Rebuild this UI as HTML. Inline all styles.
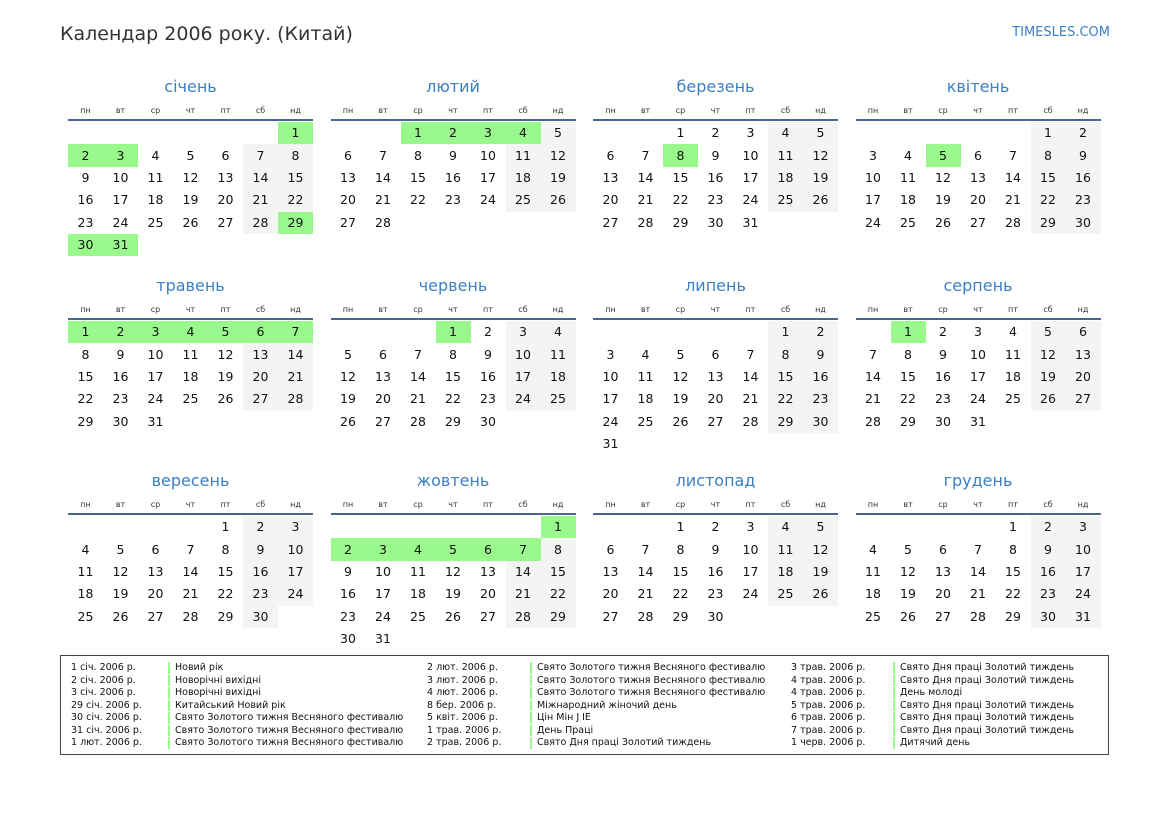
<!DOCTYPE html>
<html><head><meta charset="utf-8"><style>
body{margin:0;width:1169px;height:827px;background:#fff;font-family:"DejaVu Sans","Liberation Sans",sans-serif;position:relative;overflow:hidden;color:#111}
.hd{position:absolute;left:60px;top:21px;font-size:19px;color:#333;line-height:26px}
.ts{position:absolute;right:59px;top:24px;font-size:13px;color:#3b7fc4;line-height:18px}
.m{position:absolute;width:245px}
.t{height:30px;line-height:34px;text-align:center;font-size:16px;color:#3b7fc4}
.w{display:flex;height:19px;border-bottom:2px solid #4a6590;box-sizing:content-box}
.w span{flex:1;text-align:center;font-size:8px;line-height:22px;height:19px;overflow:visible;color:#333}
table{border-collapse:collapse;table-layout:fixed;width:245px;margin-top:1px}
td{width:35px;height:22.4px;padding:0;text-align:center;font-size:12.5px;line-height:22px}
td.e{background:#f4f4f4}td.h{background:#9af98c}
.lg{position:absolute;left:60px;top:655px;width:1047px;height:98px;border:1.5px solid #444}
.c{position:absolute;top:6px;font-size:9.5px;line-height:12.5px;color:#111;white-space:nowrap}
.b{border-left:2px solid #9af98c;padding-left:5px;margin-bottom:1px;line-height:11.5px}
</style></head><body>
<div class="hd">Календар 2006 року. (Китай)</div>
<div class="ts">TIMESLES.COM</div>

<div class="m" style="left:68px;top:70px"><div class="t">січень</div><div class="w"><span>пн</span><span>вт</span><span>ср</span><span>чт</span><span>пт</span><span>сб</span><span>нд</span></div><table>
<tr><td></td><td></td><td></td><td></td><td></td><td></td><td class="h">1</td></tr>
<tr><td class="h">2</td><td class="h">3</td><td>4</td><td>5</td><td>6</td><td class="e">7</td><td class="e">8</td></tr>
<tr><td>9</td><td>10</td><td>11</td><td>12</td><td>13</td><td class="e">14</td><td class="e">15</td></tr>
<tr><td>16</td><td>17</td><td>18</td><td>19</td><td>20</td><td class="e">21</td><td class="e">22</td></tr>
<tr><td>23</td><td>24</td><td>25</td><td>26</td><td>27</td><td class="e">28</td><td class="h">29</td></tr>
<tr><td class="h">30</td><td class="h">31</td><td></td><td></td><td></td><td></td><td></td></tr></table></div>

<div class="m" style="left:330.5px;top:70px"><div class="t">лютий</div><div class="w"><span>пн</span><span>вт</span><span>ср</span><span>чт</span><span>пт</span><span>сб</span><span>нд</span></div><table>
<tr><td></td><td></td><td class="h">1</td><td class="h">2</td><td class="h">3</td><td class="h">4</td><td class="e">5</td></tr>
<tr><td>6</td><td>7</td><td>8</td><td>9</td><td>10</td><td class="e">11</td><td class="e">12</td></tr>
<tr><td>13</td><td>14</td><td>15</td><td>16</td><td>17</td><td class="e">18</td><td class="e">19</td></tr>
<tr><td>20</td><td>21</td><td>22</td><td>23</td><td>24</td><td class="e">25</td><td class="e">26</td></tr>
<tr><td>27</td><td>28</td><td></td><td></td><td></td><td></td><td></td></tr></table></div>

<div class="m" style="left:593px;top:70px"><div class="t">березень</div><div class="w"><span>пн</span><span>вт</span><span>ср</span><span>чт</span><span>пт</span><span>сб</span><span>нд</span></div><table>
<tr><td></td><td></td><td>1</td><td>2</td><td>3</td><td class="e">4</td><td class="e">5</td></tr>
<tr><td>6</td><td>7</td><td class="h">8</td><td>9</td><td>10</td><td class="e">11</td><td class="e">12</td></tr>
<tr><td>13</td><td>14</td><td>15</td><td>16</td><td>17</td><td class="e">18</td><td class="e">19</td></tr>
<tr><td>20</td><td>21</td><td>22</td><td>23</td><td>24</td><td class="e">25</td><td class="e">26</td></tr>
<tr><td>27</td><td>28</td><td>29</td><td>30</td><td>31</td><td></td><td></td></tr></table></div>

<div class="m" style="left:855.5px;top:70px"><div class="t">квітень</div><div class="w"><span>пн</span><span>вт</span><span>ср</span><span>чт</span><span>пт</span><span>сб</span><span>нд</span></div><table>
<tr><td></td><td></td><td></td><td></td><td></td><td class="e">1</td><td class="e">2</td></tr>
<tr><td>3</td><td>4</td><td class="h">5</td><td>6</td><td>7</td><td class="e">8</td><td class="e">9</td></tr>
<tr><td>10</td><td>11</td><td>12</td><td>13</td><td>14</td><td class="e">15</td><td class="e">16</td></tr>
<tr><td>17</td><td>18</td><td>19</td><td>20</td><td>21</td><td class="e">22</td><td class="e">23</td></tr>
<tr><td>24</td><td>25</td><td>26</td><td>27</td><td>28</td><td class="e">29</td><td class="e">30</td></tr></table></div>

<div class="m" style="left:68px;top:269px"><div class="t">травень</div><div class="w"><span>пн</span><span>вт</span><span>ср</span><span>чт</span><span>пт</span><span>сб</span><span>нд</span></div><table>
<tr><td class="h">1</td><td class="h">2</td><td class="h">3</td><td class="h">4</td><td class="h">5</td><td class="h">6</td><td class="h">7</td></tr>
<tr><td>8</td><td>9</td><td>10</td><td>11</td><td>12</td><td class="e">13</td><td class="e">14</td></tr>
<tr><td>15</td><td>16</td><td>17</td><td>18</td><td>19</td><td class="e">20</td><td class="e">21</td></tr>
<tr><td>22</td><td>23</td><td>24</td><td>25</td><td>26</td><td class="e">27</td><td class="e">28</td></tr>
<tr><td>29</td><td>30</td><td>31</td><td></td><td></td><td></td><td></td></tr></table></div>

<div class="m" style="left:330.5px;top:269px"><div class="t">червень</div><div class="w"><span>пн</span><span>вт</span><span>ср</span><span>чт</span><span>пт</span><span>сб</span><span>нд</span></div><table>
<tr><td></td><td></td><td></td><td class="h">1</td><td>2</td><td class="e">3</td><td class="e">4</td></tr>
<tr><td>5</td><td>6</td><td>7</td><td>8</td><td>9</td><td class="e">10</td><td class="e">11</td></tr>
<tr><td>12</td><td>13</td><td>14</td><td>15</td><td>16</td><td class="e">17</td><td class="e">18</td></tr>
<tr><td>19</td><td>20</td><td>21</td><td>22</td><td>23</td><td class="e">24</td><td class="e">25</td></tr>
<tr><td>26</td><td>27</td><td>28</td><td>29</td><td>30</td><td></td><td></td></tr></table></div>

<div class="m" style="left:593px;top:269px"><div class="t">липень</div><div class="w"><span>пн</span><span>вт</span><span>ср</span><span>чт</span><span>пт</span><span>сб</span><span>нд</span></div><table>
<tr><td></td><td></td><td></td><td></td><td></td><td class="e">1</td><td class="e">2</td></tr>
<tr><td>3</td><td>4</td><td>5</td><td>6</td><td>7</td><td class="e">8</td><td class="e">9</td></tr>
<tr><td>10</td><td>11</td><td>12</td><td>13</td><td>14</td><td class="e">15</td><td class="e">16</td></tr>
<tr><td>17</td><td>18</td><td>19</td><td>20</td><td>21</td><td class="e">22</td><td class="e">23</td></tr>
<tr><td>24</td><td>25</td><td>26</td><td>27</td><td>28</td><td class="e">29</td><td class="e">30</td></tr>
<tr><td>31</td><td></td><td></td><td></td><td></td><td></td><td></td></tr></table></div>

<div class="m" style="left:855.5px;top:269px"><div class="t">серпень</div><div class="w"><span>пн</span><span>вт</span><span>ср</span><span>чт</span><span>пт</span><span>сб</span><span>нд</span></div><table>
<tr><td></td><td class="h">1</td><td>2</td><td>3</td><td>4</td><td class="e">5</td><td class="e">6</td></tr>
<tr><td>7</td><td>8</td><td>9</td><td>10</td><td>11</td><td class="e">12</td><td class="e">13</td></tr>
<tr><td>14</td><td>15</td><td>16</td><td>17</td><td>18</td><td class="e">19</td><td class="e">20</td></tr>
<tr><td>21</td><td>22</td><td>23</td><td>24</td><td>25</td><td class="e">26</td><td class="e">27</td></tr>
<tr><td>28</td><td>29</td><td>30</td><td>31</td><td></td><td></td><td></td></tr></table></div>

<div class="m" style="left:68px;top:464px"><div class="t">вересень</div><div class="w"><span>пн</span><span>вт</span><span>ср</span><span>чт</span><span>пт</span><span>сб</span><span>нд</span></div><table>
<tr><td></td><td></td><td></td><td></td><td>1</td><td class="e">2</td><td class="e">3</td></tr>
<tr><td>4</td><td>5</td><td>6</td><td>7</td><td>8</td><td class="e">9</td><td class="e">10</td></tr>
<tr><td>11</td><td>12</td><td>13</td><td>14</td><td>15</td><td class="e">16</td><td class="e">17</td></tr>
<tr><td>18</td><td>19</td><td>20</td><td>21</td><td>22</td><td class="e">23</td><td class="e">24</td></tr>
<tr><td>25</td><td>26</td><td>27</td><td>28</td><td>29</td><td class="e">30</td><td></td></tr></table></div>

<div class="m" style="left:330.5px;top:464px"><div class="t">жовтень</div><div class="w"><span>пн</span><span>вт</span><span>ср</span><span>чт</span><span>пт</span><span>сб</span><span>нд</span></div><table>
<tr><td></td><td></td><td></td><td></td><td></td><td></td><td class="h">1</td></tr>
<tr><td class="h">2</td><td class="h">3</td><td class="h">4</td><td class="h">5</td><td class="h">6</td><td class="h">7</td><td class="e">8</td></tr>
<tr><td>9</td><td>10</td><td>11</td><td>12</td><td>13</td><td class="e">14</td><td class="e">15</td></tr>
<tr><td>16</td><td>17</td><td>18</td><td>19</td><td>20</td><td class="e">21</td><td class="e">22</td></tr>
<tr><td>23</td><td>24</td><td>25</td><td>26</td><td>27</td><td class="e">28</td><td class="e">29</td></tr>
<tr><td>30</td><td>31</td><td></td><td></td><td></td><td></td><td></td></tr></table></div>

<div class="m" style="left:593px;top:464px"><div class="t">листопад</div><div class="w"><span>пн</span><span>вт</span><span>ср</span><span>чт</span><span>пт</span><span>сб</span><span>нд</span></div><table>
<tr><td></td><td></td><td>1</td><td>2</td><td>3</td><td class="e">4</td><td class="e">5</td></tr>
<tr><td>6</td><td>7</td><td>8</td><td>9</td><td>10</td><td class="e">11</td><td class="e">12</td></tr>
<tr><td>13</td><td>14</td><td>15</td><td>16</td><td>17</td><td class="e">18</td><td class="e">19</td></tr>
<tr><td>20</td><td>21</td><td>22</td><td>23</td><td>24</td><td class="e">25</td><td class="e">26</td></tr>
<tr><td>27</td><td>28</td><td>29</td><td>30</td><td></td><td></td><td></td></tr></table></div>

<div class="m" style="left:855.5px;top:464px"><div class="t">грудень</div><div class="w"><span>пн</span><span>вт</span><span>ср</span><span>чт</span><span>пт</span><span>сб</span><span>нд</span></div><table>
<tr><td></td><td></td><td></td><td></td><td>1</td><td class="e">2</td><td class="e">3</td></tr>
<tr><td>4</td><td>5</td><td>6</td><td>7</td><td>8</td><td class="e">9</td><td class="e">10</td></tr>
<tr><td>11</td><td>12</td><td>13</td><td>14</td><td>15</td><td class="e">16</td><td class="e">17</td></tr>
<tr><td>18</td><td>19</td><td>20</td><td>21</td><td>22</td><td class="e">23</td><td class="e">24</td></tr>
<tr><td>25</td><td>26</td><td>27</td><td>28</td><td>29</td><td class="e">30</td><td class="e">31</td></tr></table></div>

<div class="lg">
<div class="c" style="left:10px">1 січ. 2006 р.<br>2 січ. 2006 р.<br>3 січ. 2006 р.<br>29 січ. 2006 р.<br>30 січ. 2006 р.<br>31 січ. 2006 р.<br>1 лют. 2006 р.</div>
<div class="c" style="left:107px"><div class="b">Новий рік</div><div class="b">Новорічні вихідні</div><div class="b">Новорічні вихідні</div><div class="b">Китайський Новий рік</div><div class="b">Свято Золотого тижня Весняного фестивалю</div><div class="b">Свято Золотого тижня Весняного фестивалю</div><div class="b">Свято Золотого тижня Весняного фестивалю</div></div>
<div class="c" style="left:366px">2 лют. 2006 р.<br>3 лют. 2006 р.<br>4 лют. 2006 р.<br>8 бер. 2006 р.<br>5 квіт. 2006 р.<br>1 трав. 2006 р.<br>2 трав. 2006 р.</div>
<div class="c" style="left:469px"><div class="b">Свято Золотого тижня Весняного фестивалю</div><div class="b">Свято Золотого тижня Весняного фестивалю</div><div class="b">Свято Золотого тижня Весняного фестивалю</div><div class="b">Міжнародний жіночий день</div><div class="b">Цін Мін Ј ІЕ</div><div class="b">День Праці</div><div class="b">Свято Дня праці Золотий тиждень</div></div>
<div class="c" style="left:730px">3 трав. 2006 р.<br>4 трав. 2006 р.<br>4 трав. 2006 р.<br>5 трав. 2006 р.<br>6 трав. 2006 р.<br>7 трав. 2006 р.<br>1 черв. 2006 р.</div>
<div class="c" style="left:832px"><div class="b">Свято Дня праці Золотий тиждень</div><div class="b">Свято Дня праці Золотий тиждень</div><div class="b">День молоді</div><div class="b">Свято Дня праці Золотий тиждень</div><div class="b">Свято Дня праці Золотий тиждень</div><div class="b">Свято Дня праці Золотий тиждень</div><div class="b">Дитячий день</div></div>
</div>
</body></html>
